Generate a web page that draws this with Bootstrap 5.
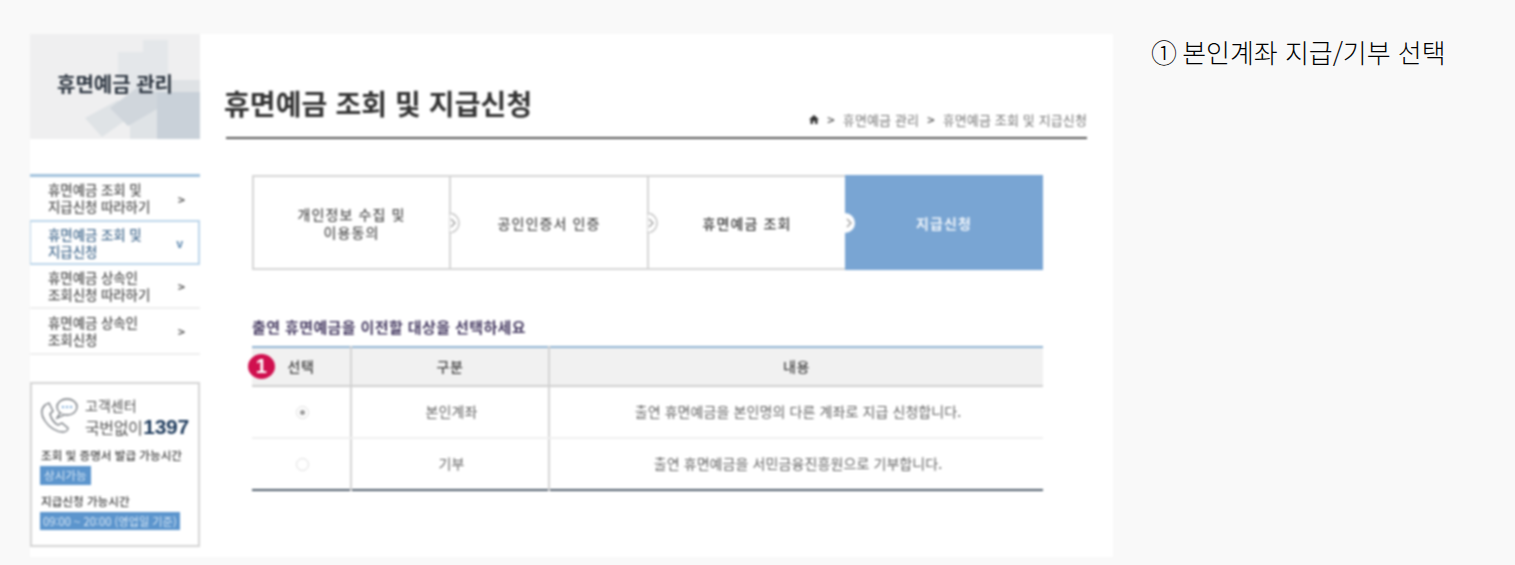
<!DOCTYPE html>
<html lang="ko">
<head>
<meta charset="utf-8">
<title>본인계좌 지급/기부 선택</title>
<link href="https://cdn.jsdelivr.net/npm/bootstrap@5.3.0/dist/css/bootstrap.min.css" rel="stylesheet">
<style>
html,body{height:100%}
body{background:#f9f9f9;font-family:"Noto Sans CJK KR","Noto Sans",sans-serif;color:#222;overflow:hidden}
.stage{padding:34px 0 0 30px;gap:38px}
.shot{width:1083px;height:523px;background:#fff;flex:none}
.blurred{filter:blur(.85px)}
.side{width:170px;flex:none}
.side-head{height:105px;background:#efeff0;position:relative;overflow:hidden}
.side-art{position:absolute;inset:0}
.side-title{position:relative;font-size:20px;font-weight:700;color:#2c3540;line-height:1;padding:40px 0 0 27px}
.side-nav{margin-top:35px;border-top:3px solid #a3c3dd}
.side-item{height:44px;padding:0 15px 0 18px;font-size:13.5px;font-weight:500;line-height:17px;color:#555;border-bottom:2px solid #eee;letter-spacing:-.1px}
.side-item.first{height:43px;border-bottom:0;padding-bottom:2px}
.first .side-arrow{margin-top:3px}
.side-item.on{height:45px;border:2px solid #bcd6ea;border-left-width:1px;color:#4a6f92;padding:0 15px 0 17px}
.side-item.tall{height:46px}
.side-arrow{font-size:12px;font-weight:700;color:#555}
.on .side-arrow{color:#5b86ad}
.help{margin-top:27px;height:165px;border:2px solid #d4d4d4;padding:14px 8px 0 9px}
.help-top{gap:7px;height:44px}
.help-l1{font-size:14px;line-height:19px;color:#555;margin-top:-2px}
.help-l2{font-size:16px;line-height:24px;color:#555;letter-spacing:-.4px;white-space:nowrap}
.help-num{font-family:"Liberation Sans",sans-serif;font-weight:700;font-size:21px;color:#1d3a5c;letter-spacing:-.3px;margin-left:1px}
.help-cap{font-size:11.6px;font-weight:500;color:#444;line-height:13px;margin-top:7px;white-space:nowrap}
.help-tag{display:block;width:fit-content;background:#5c95cd;color:#d9e8f6;font-size:11.2px;line-height:18px;padding:0 3px;margin:4px 0 0 -1px;white-space:nowrap}
.help-tag.wide{padding:1px 4px;font-size:11.6px;line-height:17px}
.help-cap.second{margin-top:10px}
.main-col{width:913px;flex:none}
.head-row{height:105px;border-bottom:2px solid #555;margin-left:26px;width:861px}
.page-title{font-size:28px;font-weight:700;color:#333;line-height:1;padding:53px 0 20px;margin:0 0 0 -2px;letter-spacing:.1px}
.crumb{font-size:13px;color:#777;line-height:1;gap:8px;padding-bottom:11px;letter-spacing:.13px;white-space:nowrap}
.crumb b{color:#555;font-weight:500}
.body-pad{margin-left:52px}
.steps{margin-top:36px;height:95px;border:2px solid #d6d6d6;width:791px;border-right-width:1px}
.step{width:197px;flex:none;position:relative;font-size:14px;line-height:18px;color:#555;border-right:2px solid #d6d6d6;text-align:center;letter-spacing:1.1px;font-weight:500}
.step.mid{width:198px}
.step.dark{width:196px;color:#3c3c3c;border-right:0}
.step.last{flex:1 1 auto;width:auto;margin:-2px -1px -2px 0;background:#79a5d3;color:#eef4fa;border:0;font-weight:700}
.notch{position:absolute;right:-11px;top:50%;width:11px;height:20px;margin-top:-10px;z-index:1}
.lead-text{font-size:15px;font-weight:700;color:#473c63;line-height:1;margin-top:49px;letter-spacing:.4px}
.tbl{width:791px;margin-top:12px;border-top:2px solid #8fb3d2;border-bottom:2px solid #4c5a69;table-layout:fixed;font-size:14px;color:#666;text-align:center}
.c-a{width:99px}.c-b{width:198px}
.tbl th{height:39px;background:#f1f1f1;color:#444;font-weight:500;border-bottom:2px solid #d0d0d0;position:relative;padding:0;letter-spacing:.5px}
.tbl td{height:52px;padding:0 0 2px;border-bottom:2px solid #f0f0f0;letter-spacing:.1px}
.tbl tr:last-child td{border-bottom:0;height:52px}
.tbl td.txt{padding-left:3px}
.tbl .div{border-right:2px solid #d4d4d4}
.pin{position:absolute;left:-4px;top:6px;width:27px;height:25px;border-radius:50%;background:#d0104f;color:#fff;font-family:"Liberation Sans",sans-serif;font-weight:700;font-size:20px;line-height:25px}
.radio-dot{display:inline-block;width:13px;height:13px;margin-left:3px;border:1px solid #ddd;border-radius:50%;position:relative;vertical-align:middle}
.radio-dot.sel::after{content:"";position:absolute;left:3px;top:3px;width:5px;height:5px;background:#999;border-radius:50%}
.caption{font-size:26px;line-height:1;font-weight:300;color:#000;padding-top:5px;white-space:nowrap;letter-spacing:-.05px}
.cap-mark{margin-right:-2px}
</style>
</head>
<body>
<div class="d-flex stage">
  <div class="shot d-flex blurred">
    <aside class="side">
      <div class="side-head">
        <svg class="side-art" viewBox="0 0 170 105" aria-hidden="true">
          <rect x="113" y="6" width="25" height="52" fill="#e4e7ea"/>
          <rect x="88" y="18" width="25" height="40" fill="#e4e7ea"/>
          <rect x="100" y="58" width="27" height="47" fill="#dfe3e6"/>
          <rect x="137" y="46" width="33" height="12" fill="#dfe2e5"/>
          <rect x="127" y="58" width="43" height="47" fill="#c9d1d9"/>
          <polygon points="55,84 88,66 100,83 72,103" fill="#dfe3e6"/>
          <polygon points="80,74 108,53 127,58 127,75 98,92" fill="#d0d6dc"/>
        </svg>
        <div class="side-title">휴면예금 관리</div>
      </div>
      <div class="side-nav">
        <div class="side-item first d-flex justify-content-between align-items-center"><span>휴면예금 조회 및<br>지급신청 따라하기</span><span class="side-arrow">&gt;</span></div>
        <div class="side-item on d-flex justify-content-between align-items-center"><span>휴면예금 조회 및<br>지급신청</span><span class="side-arrow">v</span></div>
        <div class="side-item d-flex justify-content-between align-items-center"><span>휴면예금 상속인<br>조회신청 따라하기</span><span class="side-arrow">&gt;</span></div>
        <div class="side-item tall d-flex justify-content-between align-items-center"><span>휴면예금 상속인<br>조회신청</span><span class="side-arrow">&gt;</span></div>
      </div>
      <div class="help">
        <div class="d-flex help-top">
          <svg width="37" height="36" viewBox="0 0 37 36" fill="none" stroke="#6f747a" stroke-width="1.3" class="flex-shrink-0" aria-hidden="true">
            <path d="M4 7 C0 11 0 17 4 23 C8 29 15 34 22 34 C25 34 27 32 27 30 L21 25 L17 27 C13 25 10 20 9 16 L12 13 L8 5 Z"/>
            <ellipse cx="26" cy="9" rx="10" ry="8" fill="#fff"/>
            <path d="M19 15 L16 20 L23 17" fill="#fff"/>
            <circle cx="22" cy="9" r="1.1" fill="#5c95cd" stroke="none"/><circle cx="26" cy="9" r="1.1" fill="#5c95cd" stroke="none"/><circle cx="30" cy="9" r="1.1" fill="#5c95cd" stroke="none"/>
          </svg>
          <div>
            <div class="help-l1">고객센터</div>
            <div class="help-l2">국번없이<span class="help-num">1397</span></div>
          </div>
        </div>
        <div class="help-cap">조회 및 증명서 발급 가능시간</div>
        <span class="help-tag wide">상시가능</span>
        <div class="help-cap second">지급신청 가능시간</div>
        <span class="help-tag">09:00 ~ 20:00 (영업일 기준)</span>
      </div>
    </aside>
    <main class="main-col">
      <div class="head-row d-flex justify-content-between align-items-end">
        <h1 class="page-title">휴면예금 조회 및 지급신청</h1>
        <div class="crumb d-flex align-items-center">
          <svg width="10" height="9" viewBox="0 0 10 9" aria-hidden="true"><path d="M5 0 L10 4.6 H8.5 V9 H6 V6 H4 V9 H1.5 V4.6 H0 Z" fill="#333"/></svg>
          <b>&gt;</b><span>휴면예금 관리</span><b>&gt;</b><span>휴면예금 조회 및 지급신청</span>
        </div>
      </div>
      <div class="body-pad">
        <div class="steps d-flex">
          <div class="step d-flex align-items-center justify-content-center"><span>개인정보 수집 및<br>이용동의</span>
            <svg class="notch" viewBox="0 0 11 20" aria-hidden="true"><path d="M0 0 A10 10 0 0 1 0 20 Z" fill="#fff" stroke="#c4c4c4" stroke-width="1.4"/><path d="M2 6 L6 10 L2 14" fill="none" stroke="#999" stroke-width="1.2"/></svg></div>
          <div class="step mid d-flex align-items-center justify-content-center"><span>공인인증서 인증</span>
            <svg class="notch" viewBox="0 0 11 20" aria-hidden="true"><path d="M0 0 A10 10 0 0 1 0 20 Z" fill="#fff" stroke="#c4c4c4" stroke-width="1.4"/><path d="M2 6 L6 10 L2 14" fill="none" stroke="#999" stroke-width="1.2"/></svg></div>
          <div class="step dark d-flex align-items-center justify-content-center"><span>휴면예금 조회</span>
            <svg class="notch" viewBox="0 0 11 20" aria-hidden="true"><path d="M0 0 A10 10 0 0 1 0 20 Z" fill="#fff"/><path d="M2 6 L6 10 L2 14" fill="none" stroke="#999" stroke-width="1.2"/></svg></div>
          <div class="step last d-flex align-items-center justify-content-center"><span>지급신청</span></div>
        </div>
        <div class="lead-text">출연 휴면예금을 이전할 대상을 선택하세요</div>
        <table class="tbl">
          <colgroup><col class="c-a"><col class="c-b"><col></colgroup>
          <thead><tr><th class="div"><span class="pin">1</span>선택</th><th class="div">구분</th><th>내용</th></tr></thead>
          <tbody>
            <tr><td class="div"><span class="radio-dot sel"></span></td><td class="div txt">본인계좌</td><td class="txt">출연 휴면예금을 본인명의 다른 계좌로 지급 신청합니다.</td></tr>
            <tr><td class="div"><span class="radio-dot"></span></td><td class="div txt">기부</td><td class="txt">출연 휴면예금을 서민금융진흥원으로 기부합니다.</td></tr>
          </tbody>
        </table>
      </div>
    </main>
  </div>
  <div class="caption"><span class="cap-mark">①</span> 본인계좌 지급/기부 선택</div>
</div>
<script src="https://cdn.jsdelivr.net/npm/bootstrap@5.3.0/dist/js/bootstrap.bundle.min.js"></script>
</body>
</html>
